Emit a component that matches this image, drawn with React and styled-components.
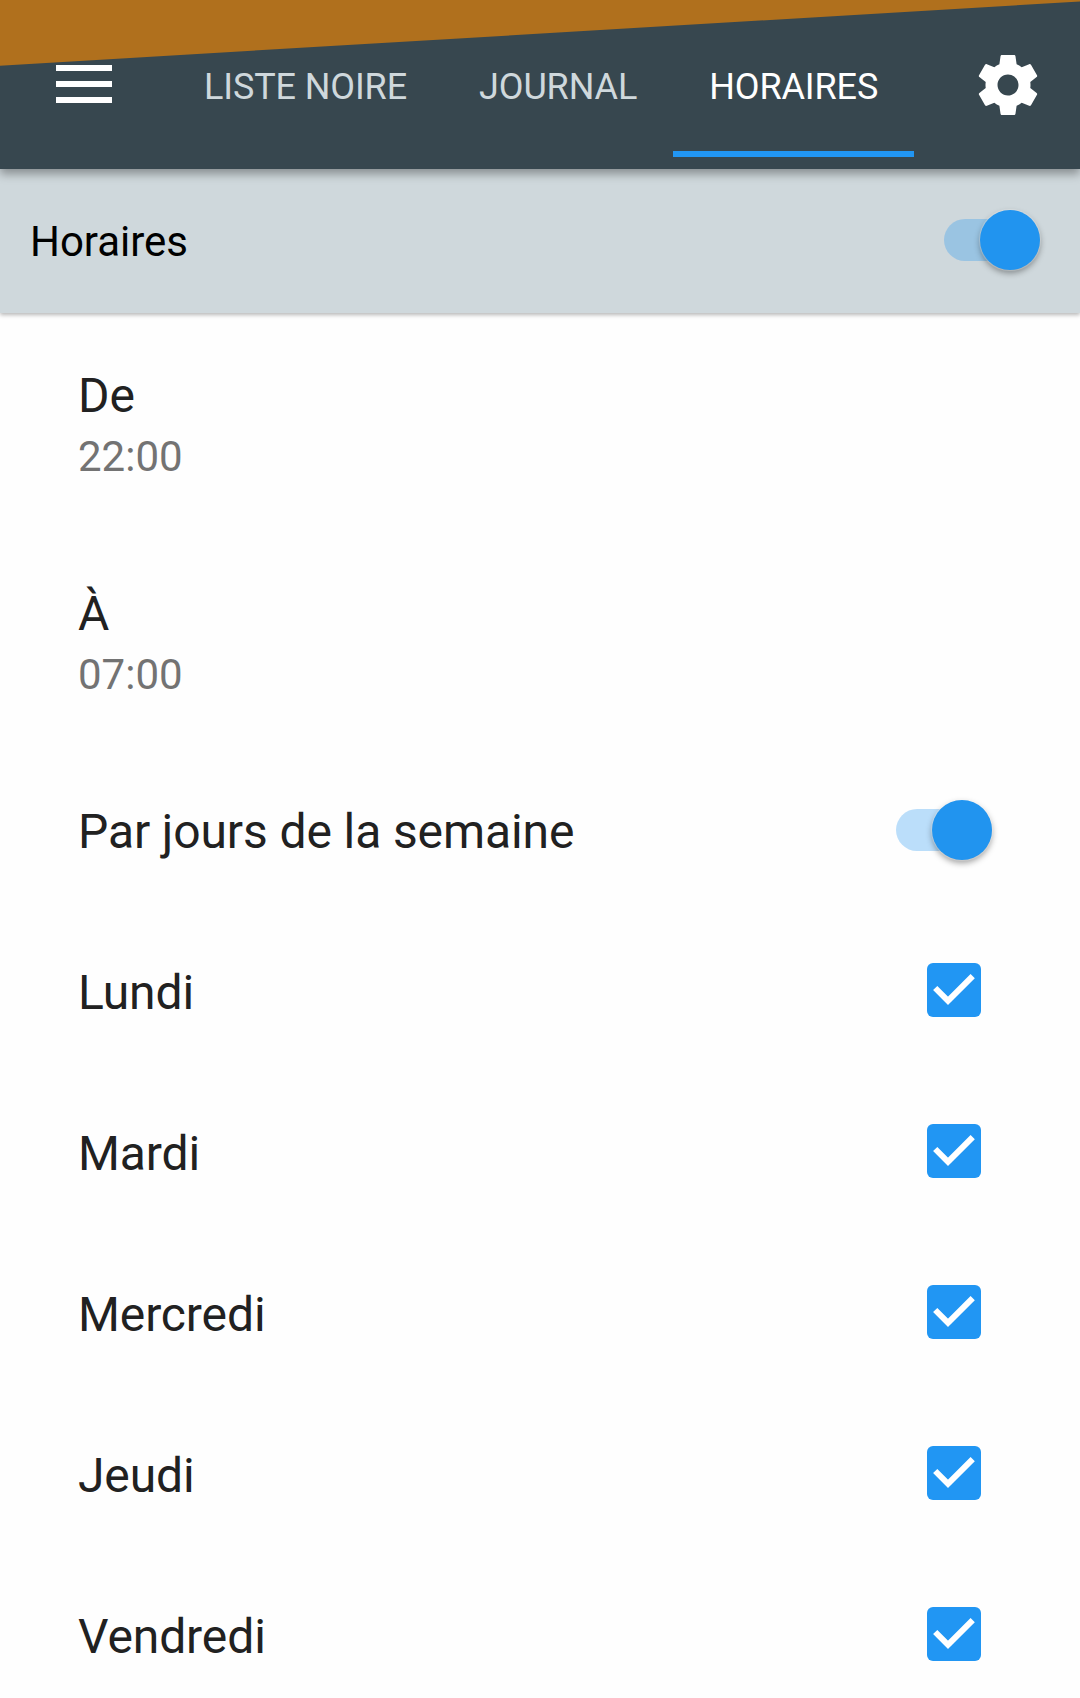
import React, { useState } from 'react';
import styled, { createGlobalStyle } from 'styled-components';

const GlobalStyle = createGlobalStyle`
  body {
    margin: 0;
    background: #fefefe;
    font-family: Roboto, "Liberation Sans", sans-serif;
    overflow: hidden;
  }
`;

const Screen = styled.div`
  position: relative;
  display: flex;
  flex-direction: column;
  width: 1080px;
  height: 1698px;
  overflow: hidden;
`;

// slanted strip lying over the top of the bar
const Banner = styled.div`
  position: absolute;
  top: 0;
  left: 0;
  z-index: 3;
  width: 100%;
  height: 66px;
  background: #b0701d;
  clip-path: polygon(0 0, 100% 0, 100% 1.5px, 0 65.7px);
`;

const TopBar = styled.header`
  position: relative;
  z-index: 2;
  display: flex;
  flex: none;
  box-sizing: border-box;
  height: 169px;
  padding: 12px 36px 0 56px;
  background: #37474f;
  box-shadow: 0 5px 9px rgba(0, 0, 0, 0.34);
`;

const IconButton = styled.button`
  display: flex;
  flex: none;
  height: ${props => props.$height}px;
  padding: 0;
  border: 0;
  background: none;
  color: #fff;
  align-items: center;

  svg {
    display: block;
    fill: currentColor;
  }
`;

const Tabs = styled.nav`
  display: flex;
  flex: 1;
  margin-left: 56px;
`;

const Tab = styled.button`
  box-sizing: border-box;
  height: 145px;
  padding: 11px 36px 0;
  border: 0;
  border-bottom: 6px solid ${props => (props.$active ? '#2196f3' : 'transparent')};
  background: none;
  color: ${props => (props.$active ? '#fff' : '#cfd8dc')};
  font-family: inherit;
  font-size: 36px;
  line-height: 42px;
  letter-spacing: -0.12px;
  white-space: nowrap;
`;

const SectionBar = styled.div`
  position: relative;
  z-index: 1;
  display: flex;
  flex: none;
  align-items: center;
  justify-content: space-between;
  box-sizing: border-box;
  height: 144px;
  padding: 0 40px 2px 30px;
  background: #cfd8dc;
  box-shadow: 0 2px 4px rgba(0, 0, 0, 0.28);
`;

const Heading = styled.div`
  padding-top: 3px;
  color: #000;
  font-size: 42px;
  line-height: 49px;
  letter-spacing: -0.05px;
`;

const Title = styled.div`
  padding: 5px 0 1px;
  color: #212121;
  font-size: 48px;
  line-height: 57px;
  letter-spacing: -0.11px;
`;

const Summary = styled.div`
  padding: 7px 0 1px;
  color: #737373;
  font-size: 42px;
  line-height: 49px;
`;

const Track = styled.button`
  display: flex;
  align-items: center;
  justify-content: flex-end;
  width: 96px;
  height: 42px;
  padding: 0;
  border: 0;
  border-radius: 21px;
  background: rgba(33, 150, 243, 0.3);
`;

const Thumb = styled.span`
  flex: none;
  width: 60px;
  height: 60px;
  margin-top: -1px;
  border-radius: 50%;
  background: #2194ef;
  box-shadow: 0 0 1px 1px rgba(255, 255, 255, 0.3), 0 3px 6px rgba(0, 0, 0, 0.38);
`;

const Box = styled.button`
  display: flex;
  width: 54px;
  height: 54px;
  margin-bottom: 1px;
  padding: 0;
  border: 0;
  border-radius: 6px;
  background: #2196f3;

  svg {
    fill: none;
    stroke: #fff;
    stroke-width: 6;
  }
`;

const Row = styled.div`
  display: flex;
  flex: none;
  align-items: center;
  justify-content: space-between;
  box-sizing: border-box;
  height: ${props => (props.$tall ? 218 : 161)}px;
  padding: 0 ${props => props.$end || 0}px 0 78px;

  ${Track} {
    margin-top: 1px;
  }
`;

const tabs = ['LISTE NOIRE', 'JOURNAL', 'HORAIRES'];

const times = [
  { title: 'De', value: '22:00' },
  { title: 'À', value: '07:00' },
];

const days = ['Lundi', 'Mardi', 'Mercredi', 'Jeudi', 'Vendredi'];

function Switch() {
  return (
    <Track role="switch" aria-checked="true">
      <Thumb />
    </Track>
  );
}

function Checkbox() {
  return (
    <Box role="checkbox" aria-checked="true">
      <svg width="54" height="54" viewBox="0 0 54 54">
        <path d="M8.2 25L21 37.8L45.7 13.1" />
      </svg>
    </Box>
  );
}

function App() {
  const [active, setActive] = useState('HORAIRES');

  return (
    <Screen>
      <GlobalStyle />
      <Banner />
      <TopBar>
        <IconButton aria-label="Menu" $height={144}>
          <svg width="56" height="38" viewBox="0 0 56 38">
            <path d="M0 0h56v6H0zM0 16h56v6H0zM0 32h56v6H0z" />
          </svg>
        </IconButton>
        <Tabs>
          {tabs.map(tab => (
            <Tab key={tab} $active={tab === active} onClick={() => setActive(tab)}>
              {tab}
            </Tab>
          ))}
        </Tabs>
        <IconButton aria-label="Paramètres" $height={146}>
          <svg width="72" height="72" viewBox="0 0 24 24">
            <path d="M19.43 12.98c.04-.32.07-.64.07-.98s-.03-.66-.07-.98l2.11-1.65c.19-.15.24-.42.12-.64l-2-3.46c-.12-.22-.39-.3-.61-.22l-2.49 1c-.52-.4-1.08-.73-1.69-.98l-.38-2.65C14.46 2.18 14.25 2 14 2h-4c-.25 0-.46.18-.49.42l-.38 2.65c-.61.25-1.17.59-1.69.98l-2.49-1c-.23-.09-.49 0-.61.22l-2 3.46c-.13.22-.07.49.12.64l2.11 1.65c-.04.32-.07.65-.07.98s.03.66.07.98l-2.11 1.65c-.19.15-.24.42-.12.64l2 3.46c.12.22.39.3.61.22l2.49-1c.52.4 1.08.73 1.69.98l.38 2.65c.03.24.24.42.49.42h4c.25 0 .46-.18.49-.42l.38-2.65c.61-.25 1.17-.59 1.69-.98l2.49 1c.23.09.49 0 .61-.22l2-3.46c.12-.22.07-.49-.12-.64l-2.11-1.65zM12 15.5c-1.93 0-3.5-1.57-3.5-3.5s1.57-3.5 3.5-3.5 3.5 1.57 3.5 3.5-1.57 3.5-3.5 3.5z" />
          </svg>
        </IconButton>
      </TopBar>
      <SectionBar>
        <Heading>Horaires</Heading>
        <Switch />
      </SectionBar>
      {times.map(time => (
        <Row key={time.title} $tall>
          <div>
            <Title>{time.title}</Title>
            <Summary>{time.value}</Summary>
          </div>
        </Row>
      ))}
      <Row $end={88}>
        <Title>Par jours de la semaine</Title>
        <Switch />
      </Row>
      {days.map(day => (
        <Row key={day} $end={99}>
          <Title>{day}</Title>
          <Checkbox />
        </Row>
      ))}
    </Screen>
  );
}

export default App;
